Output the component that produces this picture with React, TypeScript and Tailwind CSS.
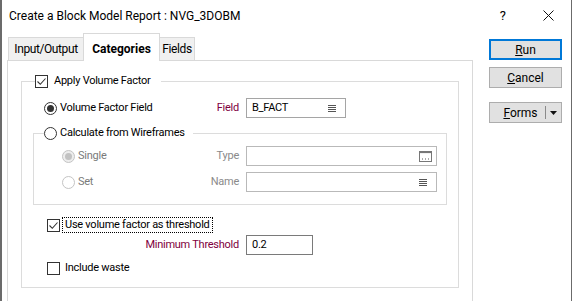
import type { ReactNode } from "react";

const Check = ({ checked }: { checked?: boolean }) => (
  <span className="flex h-[13px] w-[13px] shrink-0 items-center justify-center border border-[#333] bg-white">
    {checked && (
      <svg width="11" height="11" viewBox="0 0 11 11">
        <path d="M1.5 5.5 L4.3 8.3 L9.5 2.5" fill="none" stroke="#333" strokeWidth="1.1" />
      </svg>
    )}
  </span>
);

const Radio = ({ checked, disabled }: { checked?: boolean; disabled?: boolean }) => (
  <span
    className={`flex h-[13px] w-[13px] shrink-0 items-center justify-center rounded-full border ${
      disabled ? "border-[#c4c4c4] " + (checked ? "bg-[#ededed]" : "bg-white") : "border-[#333] bg-white"
    }`}
  >
    {checked && (
      <span className={`h-[7px] w-[7px] rounded-full ${disabled ? "bg-[#c2c2c2]" : "bg-[#333]"}`} />
    )}
  </span>
);

const ListIcon = () => (
  <svg width="8" height="7" viewBox="0 0 8 7" className="shrink-0">
    <path d="M0 0.5H8M0 2.5H8M0 4.5H8M0 6.5H8" stroke="#555" strokeWidth="1" />
  </svg>
);

const BrowseIcon = () => (
  <svg width="13" height="11" viewBox="0 0 13 11" className="shrink-0">
    <rect x="0.5" y="0.5" width="12" height="10" fill="none" stroke="#777" />
    <path d="M1 1.5H12" stroke="#777" strokeWidth="1.2" />
    <path d="M3 8H4M6 8H7M9 8H10" stroke="#555" strokeWidth="1" />
  </svg>
);

function Box({
  width,
  border,
  children,
}: {
  width: string;
  border: string;
  children?: ReactNode;
}) {
  return (
    <div className={`flex h-[20px] items-center justify-between border bg-white pl-[5px] pr-[9px] ${width} ${border}`}>
      {children}
    </div>
  );
}

function Button({ children, primary }: { children: ReactNode; primary?: boolean }) {
  return (
    <div
      className={`flex h-[21px] w-[73px] items-center justify-center bg-[#e1e1e1] text-[12px] text-black ${
        primary ? "border-2 border-[#0078d7]" : "border border-[#adadad]"
      }`}
    >
      {children}
    </div>
  );
}

export default function App() {
  return (
    <div className="h-[301px] w-[572px] overflow-hidden border-l-2 border-r border-[#6b6b6b] bg-white font-['Segoe_UI',Roboto,'Liberation_Sans',sans-serif] text-[11px] tracking-[-0.25px] text-black">
      {/* title bar */}
      <div className="flex h-[30px] items-center pl-[7px] pt-[1px] text-[12px] tracking-normal">
        <span>Create a Block Model Report : NVG_3DOBM</span>
        <span className="ml-auto mr-[37px] text-[13px]">?</span>
        <svg width="11" height="11" viewBox="0 0 11 11" className="mr-[17px]">
          <path d="M0.5 0.5L10.5 10.5M10.5 0.5L0.5 10.5" stroke="#111" strokeWidth="1" />
        </svg>
      </div>

      <div className="flex">
        <div className="ml-[5px] w-[466px]">
          {/* tabs */}
          <div className="mt-[3px] flex h-[27px] items-end pl-[1px] text-[12px]">
            <div className="h-[23px] w-[76px] border border-b-0 border-[#d9d9d9] bg-[#f0f0f0] pt-[3px] text-center leading-[16px] tracking-[-0.4px]">
              Input/Output
            </div>
            <div className="relative z-10 -mb-px -ml-px h-[28px] w-[77px] border border-b-0 border-[#d9d9d9] bg-white pt-[7px] text-center font-bold leading-[16px] tracking-normal">
              Categories
            </div>
            <div className="-ml-px h-[23px] w-[36px] border border-b-0 border-[#d9d9d9] bg-[#f0f0f0] pt-[3px] text-center leading-[16px] tracking-[-0.4px]">
              Fields
            </div>
          </div>

          {/* panel */}
          <div className="h-[260px] border border-[#d9d9d9] bg-white pt-[13px]">
            <fieldset className="ml-[13px] w-[438px] border border-[#dcdcdc] pb-[11px]">
              <legend className="ml-[13px] flex h-[14px] items-center pr-[10px]">
                <Check checked />
                <span className="ml-[6px]">Apply Volume Factor</span>
              </legend>

              <div className="mt-[10px] flex h-[20px] items-center">
                <div className="flex w-[217px] items-center pl-[22px]">
                  <Radio checked />
                  <span className="ml-[3px]">Volume Factor Field</span>
                  <span className="ml-auto text-[#800040]">Field</span>
                </div>
                <div className="ml-[7px]">
                  <Box width="w-[100px]" border="border-[#a5a5a5]">
                    <span>B_FACT</span>
                    <ListIcon />
                  </Box>
                </div>
              </div>

              <fieldset className="ml-[11px] mt-[7px] w-[414px] border border-[#dcdcdc] pb-[12px]">
                <legend className="ml-[10px] flex h-[16px] items-center pr-[8px]">
                  <Radio />
                  <span className="ml-[3px]">Calculate from Wireframes</span>
                </legend>

                <div className="mt-[5px] flex h-[20px] items-center">
                  <div className="flex w-[205px] items-center pl-[28px] text-[#7a7a7a]">
                    <Radio checked disabled />
                    <span className="ml-[3px]">Single</span>
                    <span className="ml-auto text-[#8a8a8a]">Type</span>
                  </div>
                  <div className="ml-[7px]">
                    <Box width="w-[191px]" border="border-[#b9b9b9]">
                      <span />
                      <span className="-mr-[5px]">
                        <BrowseIcon />
                      </span>
                    </Box>
                  </div>
                </div>

                <div className="mt-[6px] flex h-[20px] items-center">
                  <div className="flex w-[205px] items-center pl-[28px] text-[#7a7a7a]">
                    <Radio disabled />
                    <span className="ml-[3px]">Set</span>
                    <span className="ml-auto text-[#8a8a8a]">Name</span>
                  </div>
                  <div className="ml-[7px]">
                    <Box width="w-[191px]" border="border-[#b9b9b9]">
                      <span />
                      <ListIcon />
                    </Box>
                  </div>
                </div>
              </fieldset>

              <div className="mt-[12px] flex h-[16px] items-center pl-[25px]">
                <Check checked />
                <span className="ml-[2px] flex h-[16px] items-center border border-dotted border-black px-[2px]">
                  Use volume factor as threshold
                </span>
              </div>

              <div className="mt-[2px] flex h-[20px] items-center">
                <div className="flex w-[217px] justify-end text-[#800040]">Minimum Threshold</div>
                <div className="ml-[7px]">
                  <Box width="w-[67px]" border="border-[#7a7a7a]">
                    <span>0.2</span>
                  </Box>
                </div>
              </div>

              <div className="mt-[5px] flex h-[16px] items-center pl-[25px]">
                <Check />
                <span className="ml-[5px]">Include waste</span>
              </div>
            </fieldset>
          </div>
        </div>

        {/* buttons */}
        <div className="ml-[16px] mt-[9px] flex w-[73px] flex-col tracking-normal">
          <Button primary>
            <span>
              <u>R</u>un
            </span>
          </Button>
          <div className="mt-[7px]">
            <Button>
              <span>
                <u>C</u>ancel
              </span>
            </Button>
          </div>
          <div className="mt-[14px] flex h-[21px] w-[73px] items-center border border-[#adadad] bg-[#e1e1e1] text-[12px]">
            <span className="flex-1 pl-[6px] text-center">
              <u>F</u>orms
            </span>
            <span className="h-[13px] w-px bg-[#8a8a8a]" />
            <span className="flex w-[15px] justify-center">
              <svg width="7" height="4" viewBox="0 0 7 4">
                <path d="M0 0H7L3.5 4Z" fill="#111" />
              </svg>
            </span>
          </div>
        </div>
      </div>
    </div>
  );
}
